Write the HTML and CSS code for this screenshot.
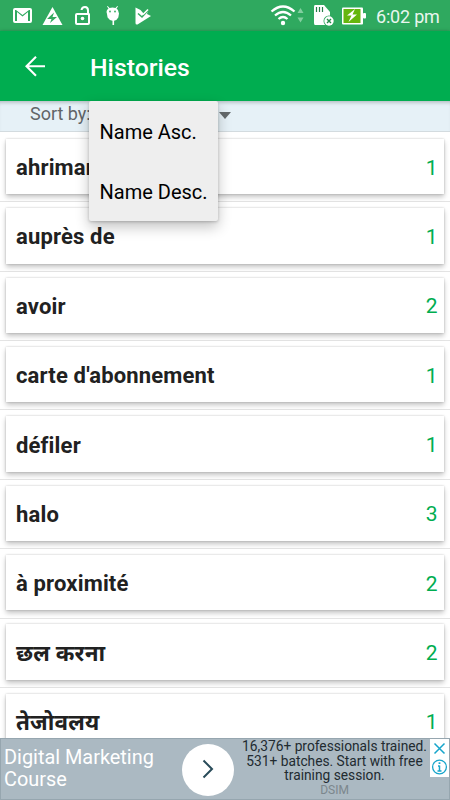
FILE: index.html
```html
<!DOCTYPE html>
<html lang="en">
<head>
<meta charset="utf-8">
<title>Histories</title>
<link rel="stylesheet" href="styles.css">
</head>
<body>
<div class="screen">
  <header class="status">
    <svg class="status-icons" width="160" height="31" viewBox="0 0 160 31" fill="#fff">
      <path fill-rule="evenodd" d="M15 8h15q2 0 2 2v11q0 2-2 2H15q-2 0-2-2V10q0-2 2-2zm0 2v11h2V12l5.500 4.500L28 12v9h2V10h-1l-6.500 5L16 10z"/>
      <path d="M52.500 7 62.500 25h-20z"/>
      <path d="M54 12.500l-7 6.500h4.500l-1.500 4 7-6h-4.500z" fill="#35ab60"/>
      <path fill-rule="evenodd" d="M78 13h9v-2.500q0-2.500-2-2.500t-2.500 2h-2q.5-4 4.500-4t4 4.500V13q1 0 1 1.500V23q0 2-2 2H77q-2 0-2-2v-8q0-2 2-2zm-1 2v8h11v-8z"/>
      <circle cx="82.500" cy="18.500" r="1.800"/>
      <path d="M106.500 12q0-2.500 2-3.500L107 6.500l.7-.5 1.800 2q3-1 6 0l1.800-2 .7.500-1.500 2q2 1 2 3.500l.5 1.500-.7 4q-1.600 3-4.200 3.300V25h-1.600v-4.200q-3-.3-4.900-3.300l-.7-4z"/>
      <circle cx="110" cy="11.500" r=".9" fill="#35ab60"/><circle cx="115" cy="11.500" r=".9" fill="#35ab60"/>
      <path d="M135.500 7.500l5 2.500 3.500 4 4-3.500-1 3.500 4 2-13.500 8.500q-2 .5-2-1.500z"/>
      <path d="M138 13.500l4 3.500 7-7.500" fill="none" stroke="#35ab60" stroke-width="1.500"/>
      <path d="M143 14.500l5-5" stroke="#fff" stroke-width="1.600"/>
    </svg>
    <svg class="status-icons" width="110" height="31" viewBox="265 0 110 31" fill="#fff">
      <g fill="none" stroke="#fff" stroke-width="2.300">
        <path d="M271.500 11.500q11.500-10 23 0M275 15.500q8-7 16 0M278.500 19q4.500-4 9 0"/>
      </g>
      <circle cx="283" cy="23" r="2.200"/>
      <path d="M297.500 13l3-5 3 5zM297.500 17.500h6l-3 5z" fill="#83cfa0"/>
      <path d="M314 7q0-2 1-2h9l6 7v13h-15q-1 0-1-2z"/>
      <path d="M316.500 7v5M319.500 7v5M322.500 7v5" stroke="#267f48" stroke-width="1.200"/>
      <circle cx="329" cy="21" r="5.500" fill="#2fa95f"/>
      <circle cx="329" cy="21" r="4.700"/>
      <path d="M327 19l4 4m0-4l-4 4" stroke="#258d49" stroke-width="1.400"/>
      <rect x="342" y="7.500" width="21" height="17" rx="1"/>
      <rect x="363" y="13" width="3" height="5.500" rx="1"/>
      <rect x="343.500" y="9" width="17" height="14" fill="#65b60d"/>
      <path d="M355 9l-8 6.500h4.500L348.500 22l8.500-7.500h-4.500z"/>
    </svg>
    <span class="clock">6:02 pm</span>
  </header>
  <div class="appbar">
    <svg class="back" width="22" height="22" viewBox="0 0 22 22" fill="none" stroke="#fff" stroke-width="2.100"><path d="M20 11.300H1.500M11 1.800L1.500 11.300l9.500 9.500"/></svg>
    <h1 class="title">Histories</h1>
  </div>
  <div class="sort">
    <span class="sort-label">Sort by:</span>
    <span class="caret"></span>
    <div class="menu">
      <div class="option">Name Asc.</div>
      <div class="option">Name Desc.</div>
    </div>
  </div>
  <main class="list">
    <div class="row"><div class="card"><span class="word">ahriman</span><span class="count">1</span></div></div>
    <div class="row"><div class="card"><span class="word">auprès de</span><span class="count">1</span></div></div>
    <div class="row"><div class="card"><span class="word">avoir</span><span class="count">2</span></div></div>
    <div class="row"><div class="card"><span class="word">carte d'abonnement</span><span class="count">1</span></div></div>
    <div class="row"><div class="card"><span class="word">défiler</span><span class="count">1</span></div></div>
    <div class="row"><div class="card"><span class="word">halo</span><span class="count">3</span></div></div>
    <div class="row"><div class="card"><span class="word">à proximité</span><span class="count">2</span></div></div>
    <div class="row"><div class="card"><span class="word hindi">छल करना</span><span class="count">2</span></div></div>
    <div class="row"><div class="card"><span class="word hindi">तेजोवलय</span><span class="count">1</span></div></div>
  </main>
  <footer class="ad">
    <div class="ad-title">Digital Marketing<br>Course</div>
    <div class="go"><svg width="52" height="52" viewBox="0 0 52 52" fill="none" stroke="#294b59" stroke-width="2"><path d="M21.500 16.500l8.500 8.500-8.500 8.500"/></svg></div>
    <div class="ad-copy">16,376+ professionals trained.<br>531+ batches. Start with free<br>training session.<div class="brand">DSIM</div></div>
    <div class="ad-tools">
      <svg width="19" height="38" viewBox="0 0 19 38" fill="none" stroke="#16a5cb" stroke-width="1.500"><path d="M4.500 4.500l10 10m0-10l-10 10"/><circle cx="9.500" cy="28" r="6.900" stroke-width="1.300"/><path d="M9.500 26.500v5.500M8 27h1.500M7.500 32h4"/><path d="M9.500 23.300v1.700" stroke-width="1.800"/></svg>
    </div>
  </footer>
</div>
</body>
</html>
```

FILE: styles.css
```css
* { box-sizing: border-box; }
body { margin: 0; font-family: Roboto, "Noto Sans", "Noto Sans Devanagari", sans-serif; background: #fff; }
.screen { width: 450px; height: 800px; display: flex; flex-direction: column; overflow: hidden; }
.status { flex: none; height: 31px; background: #2fa95f; display: flex; align-items: center; }
.status-icons { flex: none; }
.status-icons + .status-icons { margin-left: 105px; }
.clock { color: #e9f6ee; font-size: 18px; letter-spacing: -.2px; line-height: 31px; white-space: nowrap; padding-top: 2px; margin-left: 1px; }
.appbar { flex: none; height: 70px; background: #00ad50; display: flex; align-items: center; padding-left: 25px; box-shadow: 0 1px 4px rgba(0,0,0,.4); position: relative; z-index: 1; }
.title { margin: 4px 0 0 43px; color: #fff; font-size: 24.800px; line-height: 30px; font-weight: 500; }
.sort { flex: none; height: 31px; background: #e6f1f7; border-bottom: 1px solid #d3dbdf; position: relative; z-index: 2; display: flex; padding-left: 30px; box-shadow: inset 0 4px 4px -3px rgba(0,0,0,.28); }
.sort-label { width: 189px; color: #616568; font-size: 18px; line-height: 26px; }
.caret { width: 12px; height: 7px; margin-top: 11px; background: #64696b; clip-path: polygon(0 0, 100% 0, 50% 100%); }
.menu { position: absolute; left: 89px; top: 0; width: 128.500px; height: 120px; background: #eee; border-radius: 2px; box-shadow: 0 6px 14px rgba(0,0,0,.24), 0 1px 3px rgba(0,0,0,.2); color: #000; font-size: 20px; }
.option { height: 60px; line-height: 62px; padding-left: 10.500px; white-space: nowrap; }
.list { flex: 1; min-height: 0; overflow: hidden; padding-top: 1.100px; }
.row { height: 69.350px; padding: 5.800px 6px 6px; border-bottom: 1px solid #e4e4e4; background: #fff; }
.card { height: 55.500px; display: flex; justify-content: space-between; align-items: center; padding: 2px 6.500px 0 10px; background: #fff; box-shadow: 0 3px 5px rgba(0,0,0,.23), 0 0 2px rgba(0,0,0,.2); }
.word { color: #212121; font-size: 22px; font-weight: 700; letter-spacing: .16px; }
.hindi { font-size: 22.500px; line-height: 30px; }
.count { color: #00ad50; font-size: 21px; }
.ad { flex: none; height: 62px; background: #abb9c2; border: 1px solid #96a6af; position: relative; z-index: 2; display: flex; }
.ad-title { flex: none; width: 181px; padding: 8px 0 0 3px; color: #fff; font-size: 19.900px; line-height: 22px; white-space: nowrap; }
.go { flex: none; width: 52px; height: 52px; margin-top: 5px; border-radius: 50%; background: #fff; }
.go svg { display: block; }
.ad-copy { flex: none; width: 198px; margin-left: 1.500px; color: #222b30; font-size: 13.750px; line-height: 14.700px; text-align: center; white-space: nowrap; }
.brand { color: #7c878d; font-size: 12px; line-height: 14px; }
.ad-tools { position: absolute; right: 0; top: 0; width: 19px; height: 38px; background: #fff; }
```
